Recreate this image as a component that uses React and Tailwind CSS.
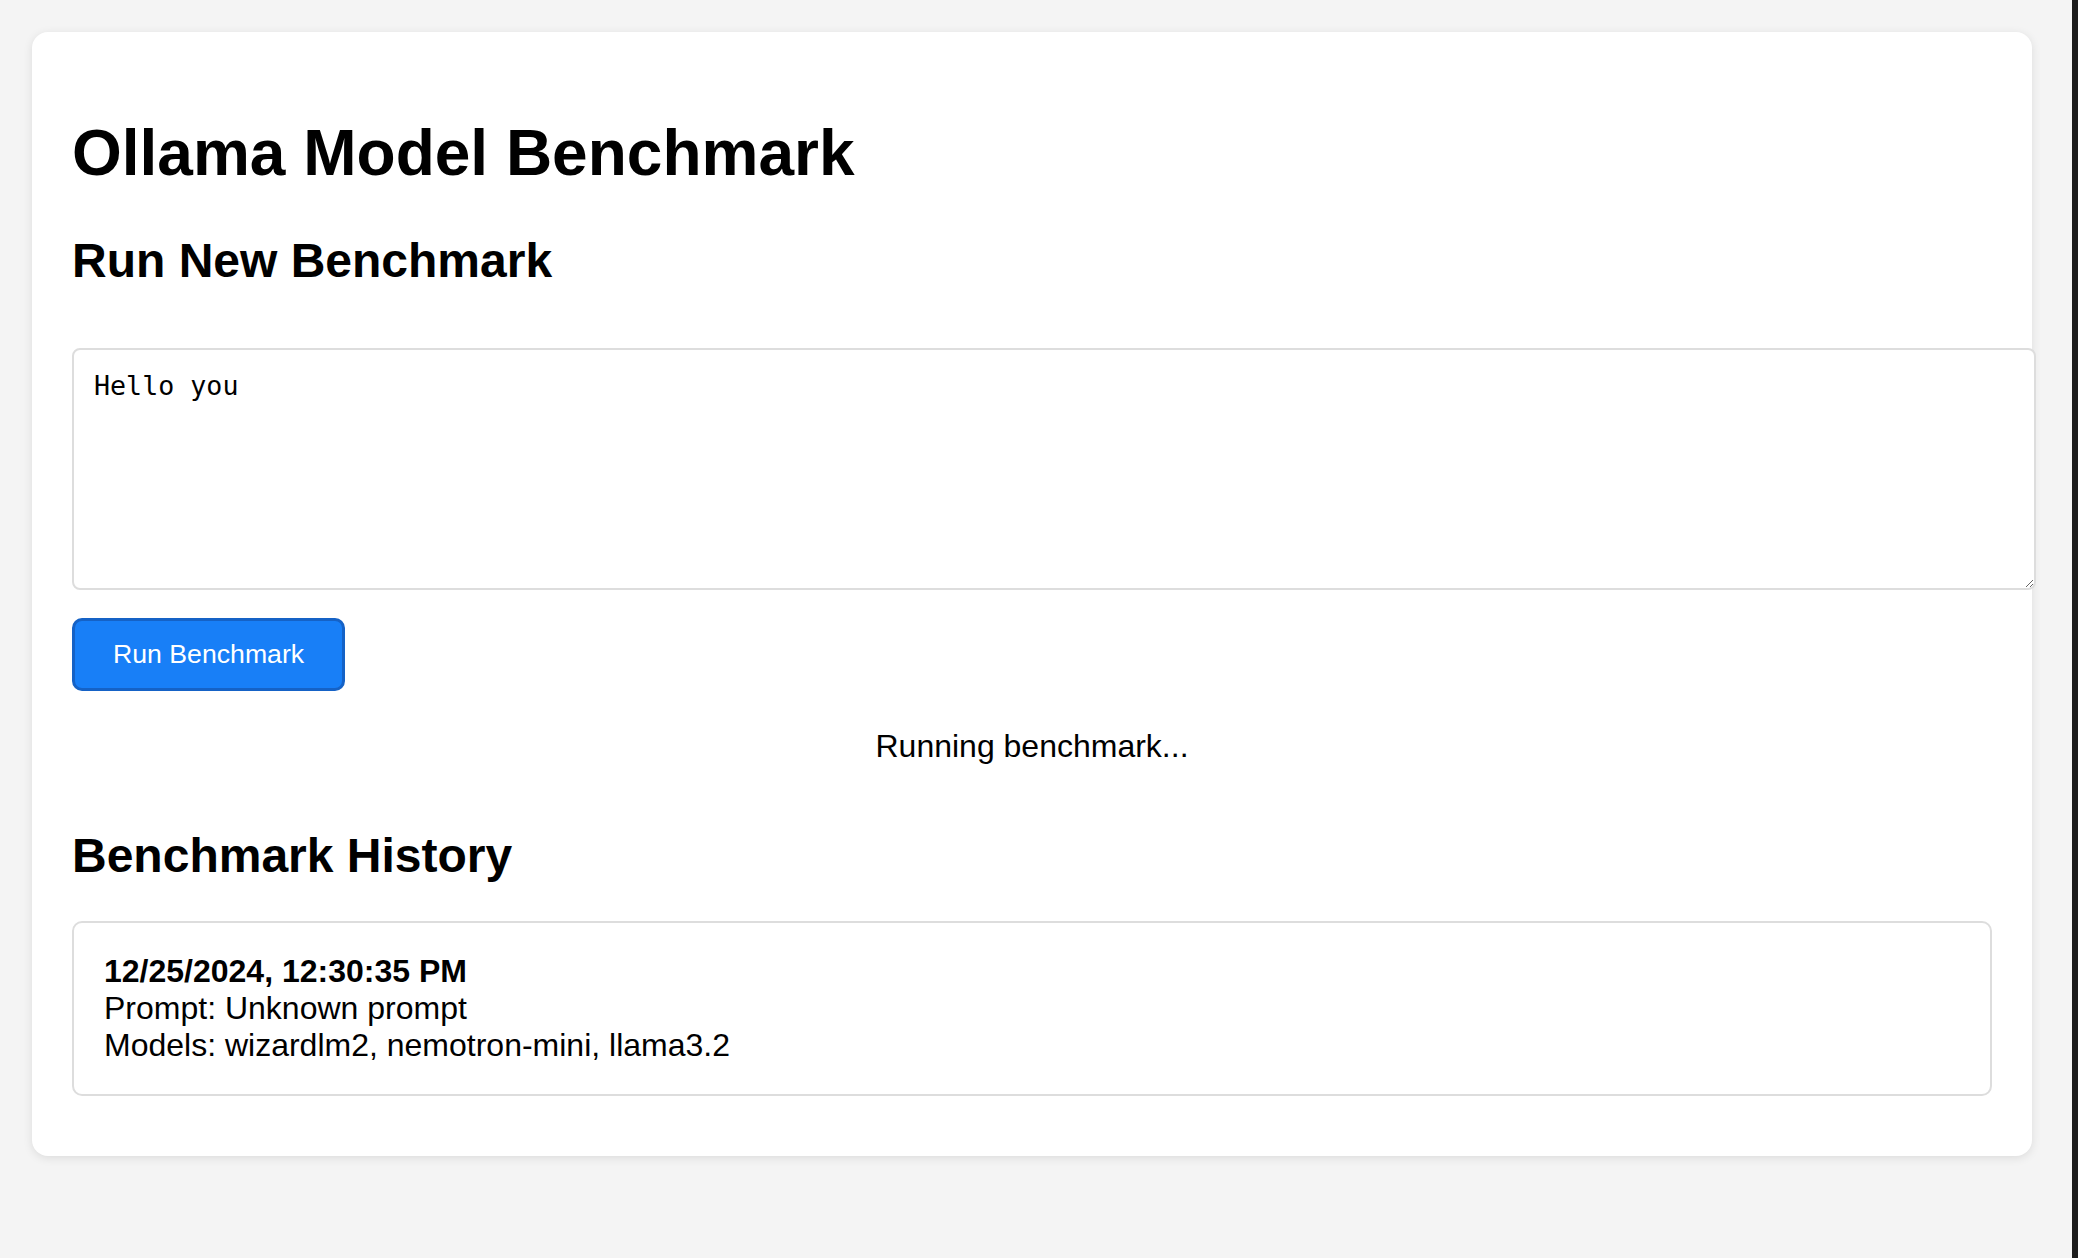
const history = [
  {
    date: '12/25/2024, 12:30:35 PM',
    prompt: 'Unknown prompt',
    models: ['wizardlm2', 'nemotron-mini', 'llama3.2'],
  },
]

export default function App() {
  return (
    <div className="flex min-h-screen bg-[#f4f4f4] font-['Liberation_Sans',Arial,sans-serif] leading-[normal] text-black">
      <div className="flex-1 p-8">
        <div className="w-[2000px] rounded-[16px] bg-white p-[40px] shadow-[0_2px_10px_rgba(0,0,0,0.1)]">
          <h1 className="mt-[44px] text-[64px] font-bold">Ollama Model Benchmark</h1>
          <h2 className="mt-[43px] text-[48px] font-bold">Run New Benchmark</h2>

          <textarea
            defaultValue="Hello you"
            className="mt-[60px] box-content block h-[198px] w-full rounded-[8px] border-2 border-[#dddddd] bg-white p-[20px] font-['DejaVu_Sans_Mono',monospace] text-[26.67px] leading-[normal] outline-none"
          />

          <button className="mt-[28px] block rounded-[10px] border-[3px] border-[#1562c6] bg-[#187ff7] px-[38px] py-[18px] text-[26.67px] leading-[normal] text-white">
            Run Benchmark
          </button>

          <p className="mt-[37px] text-center text-[32px]">Running benchmark...</p>

          <h2 className="mt-[63px] text-[48px] font-bold">Benchmark History</h2>

          {history.map((item) => (
            <div key={item.date} className="mb-[20px] mt-[38px] rounded-[10px] border-2 border-[#dddddd] p-[30px] text-[32px]">
              <div className="font-bold">{item.date}</div>
              <div>Prompt: {item.prompt}</div>
              <div>Models: {item.models.join(', ')}</div>
            </div>
          ))}
        </div>
      </div>
      <div className="w-[6px] shrink-0 bg-[#1c1c1c]" />
    </div>
  )
}
